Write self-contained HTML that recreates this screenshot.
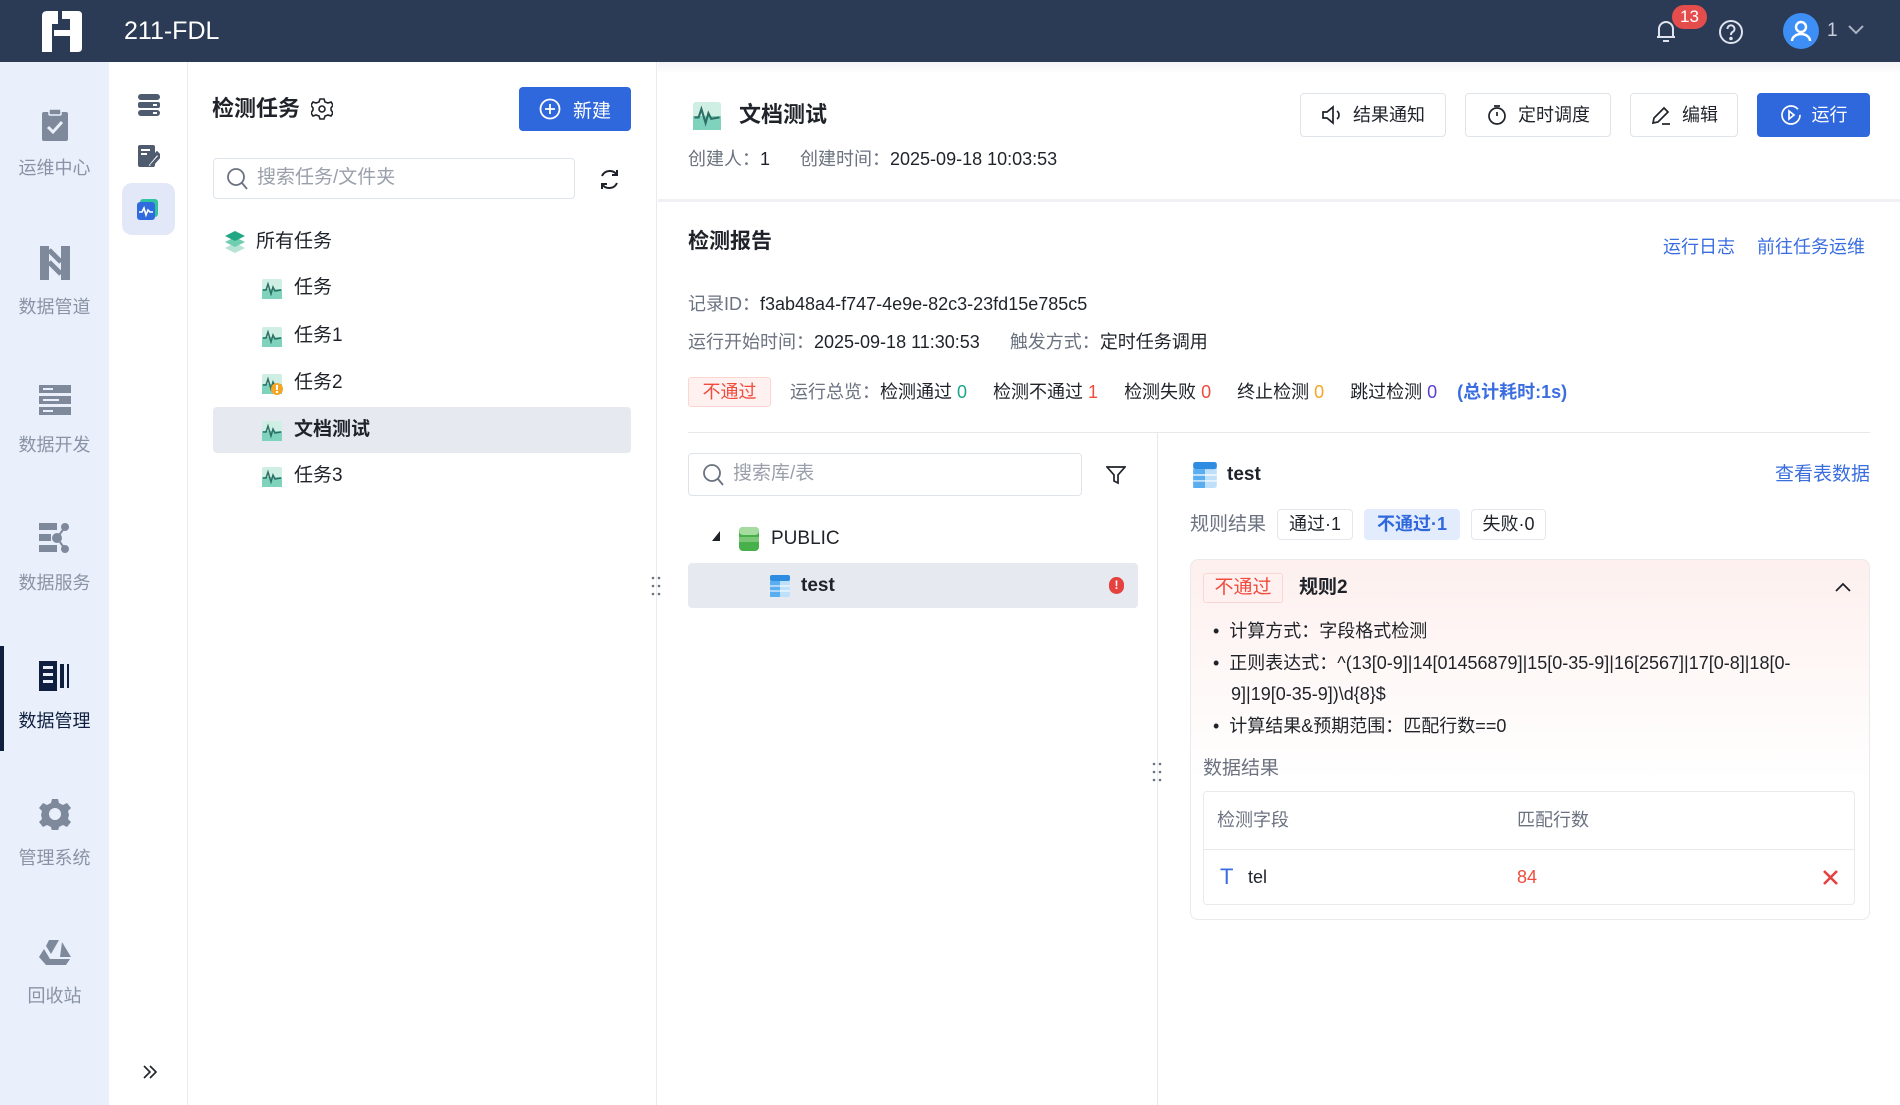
<!DOCTYPE html>
<html><head><meta charset="utf-8">
<style>
*{box-sizing:border-box;margin:0;padding:0}
body{width:1900px;height:1105px;overflow:hidden;background:#fff;font-family:"Liberation Sans","Noto Sans CJK SC",sans-serif;color:#1f2329;position:relative;font-size:18px}
.a{position:absolute;white-space:nowrap}
.hdr{left:0;top:0;width:1900px;height:62px;background:#2b3a55}
.nav{left:0;top:62px;width:109px;height:1043px;background:#eaf0fb}
.col2{left:109px;top:62px;width:79px;height:1043px;background:#fff;border-right:1px solid #e8eaef}
.navlab{width:109px;text-align:center;font-size:18px;color:#8a93a6;line-height:24px}
.btn{border:1px solid #dfe3ea;border-radius:4px;background:#fff;height:44px;line-height:42px;font-size:18px;color:#1f2329;display:flex;align-items:center;justify-content:center;gap:10px}
.gray{color:#6b7280}
.tag{border:1px solid #fbd5d2;background:#fff1f0;color:#f04b3c;border-radius:3px;text-align:center}
.chip{border:1px solid #e4e7ec;border-radius:4px;height:31px;line-height:29px;text-align:center;font-size:18px;background:#fff}
</style></head><body>
<div class="a hdr"></div>
<svg class="a" style="left:40px;top:10px" width="44" height="43" viewBox="0 0 44 43"><path d="M2 6 Q2 1 7 1 H18 V14 H12 V42 H2 Z" fill="#fff"/><path d="M22 1 H38 Q42 1 42 5 V38 Q42 42 38 42 H30 V26 H14 V20 H30 V9 H22 Z" fill="#fff"/></svg>
<div class="a" style="left:124px;top:14px;font-size:25px;color:#fff;line-height:34px">211-FDL</div>
<svg class="a" style="left:1654px;top:18px" width="24" height="26" viewBox="0 0 24 26" fill="none" stroke="#dfe4ee" stroke-width="2"><path d="M5 19 V11 a7 7 0 0 1 14 0 V19 H3 H21"/><path d="M9 23 H15"/></svg>
<div class="a" style="left:1672px;top:5px;width:35px;height:24px;border-radius:12px;background:#e54d4d;color:#fff;font-size:17px;text-align:center;line-height:24px">13</div>
<svg class="a" style="left:1718px;top:19px" width="26" height="26" viewBox="0 0 26 26" fill="none" stroke="#dfe4ee" stroke-width="2"><circle cx="13" cy="13" r="11"/><path d="M9.5 10 a3.5 3.5 0 1 1 5 3 c-1.3 .7 -1.5 1.5 -1.5 3"/><circle cx="13" cy="19.5" r=".8" fill="#dfe4ee"/></svg>
<div class="a" style="left:1783px;top:13px;width:36px;height:36px;border-radius:50%;background:#3d8ff5"></div>
<svg class="a" style="left:1783px;top:13px" width="36" height="36" viewBox="0 0 36 36" fill="none" stroke="#fff" stroke-width="2.4"><circle cx="18" cy="14" r="5"/><path d="M9 28 a9 7 0 0 1 18 0"/></svg>
<div class="a" style="left:1827px;top:19px;color:#c9cfda;font-size:19px;line-height:24px">1</div>
<svg class="a" style="left:1847px;top:24px" width="18" height="12" viewBox="0 0 18 12" fill="none" stroke="#a9b1c0" stroke-width="2"><path d="M2 2 L9 9 L16 2"/></svg>

<div class="a nav"></div>
<div class="a" style="left:0;top:646px;width:4px;height:105px;background:#0f1f3f"></div>
<svg class="a" style="left:41px;top:108px" width="28" height="34" viewBox="0 0 28 34"><rect x="1" y="4" width="26" height="29" rx="2" fill="#7e899c"/><rect x="8" y="1" width="12" height="6" rx="1" fill="#7e899c" stroke="#eaf0fb" stroke-width="1.5"/><path d="M7 19 L12 24 L21 14" stroke="#eaf0fb" stroke-width="3" fill="none"/></svg>
<div class="a navlab" style="left:0;top:156px">运维中心</div>
<svg class="a" style="left:40px;top:246px" width="30" height="34" viewBox="0 0 30 34"><rect x="0" y="0" width="9" height="34" fill="#7e899c"/><rect x="21" y="0" width="9" height="34" fill="#7e899c"/><path d="M9 4 L21 16 M9 16 L21 28" stroke="#7e899c" stroke-width="5"/></svg>
<div class="a navlab" style="left:0;top:295px">数据管道</div>
<svg class="a" style="left:39px;top:385px" width="32" height="30" viewBox="0 0 32 30" fill="#7e899c"><rect x="0" y="0" width="32" height="8"/><rect x="0" y="11" width="32" height="8"/><rect x="0" y="22" width="32" height="8"/><rect x="4" y="3" width="10" height="2" fill="#eaf0fb"/><rect x="4" y="14" width="16" height="2" fill="#eaf0fb"/><rect x="4" y="25" width="10" height="2" fill="#eaf0fb"/></svg>
<div class="a navlab" style="left:0;top:433px">数据开发</div>
<svg class="a" style="left:39px;top:522px" width="32" height="32" viewBox="0 0 32 32" fill="#7e899c"><rect x="0" y="1" width="18" height="7"/><rect x="0" y="12" width="12" height="7"/><rect x="0" y="23" width="18" height="7"/><circle cx="26" cy="5" r="4"/><circle cx="18" cy="16" r="5"/><circle cx="26" cy="27" r="4"/><path d="M18 16 L26 5 M18 16 L26 27" stroke="#7e899c" stroke-width="2"/></svg>
<div class="a navlab" style="left:0;top:571px">数据服务</div>
<svg class="a" style="left:39px;top:660px" width="32" height="32" viewBox="0 0 32 32" fill="#0f1f3f"><rect x="0" y="1" width="18" height="30"/><rect x="4" y="6" width="10" height="3" fill="#eaf0fb"/><rect x="4" y="13" width="10" height="3" fill="#eaf0fb"/><rect x="4" y="20" width="10" height="3" fill="#eaf0fb"/><rect x="21" y="4" width="4" height="24"/><rect x="28" y="4" width="2" height="24"/></svg>
<div class="a navlab" style="left:0;top:709px;color:#0f1f3f">数据管理</div>
<svg class="a" style="left:39px;top:798px" width="32" height="32" viewBox="0 0 32 32"><path d="M13 1h6l1 4 4 2 4-2 4 5-3 3 1 4-1 4 3 3-4 5-4-2-4 2-1 4h-6l-1-4-4-2-4 2-4-5 3-3-1-4 1-4-3-3 4-5 4 2 4-2z" fill="#7e899c"/><circle cx="16" cy="16" r="6" fill="#eaf0fb"/></svg>
<div class="a navlab" style="left:0;top:846px">管理系统</div>
<svg class="a" style="left:39px;top:938px" width="32" height="28" viewBox="0 0 32 28" fill="#7e899c"><path d="M10 2 h10 l-8 14 l-5 -8 z"/><path d="M23 4 l9 15 h-11 z"/><path d="M0 19 l5 -8 l6 10 h20 l-4 6 h-20 z"/></svg>
<div class="a navlab" style="left:0;top:984px">回收站</div>

<div class="a col2"></div>
<div class="a" style="left:122px;top:183px;width:53px;height:52px;border-radius:10px;background:#e2e8f8"></div>
<svg class="a" style="left:138px;top:94px" width="22" height="22" viewBox="0 0 22 22" fill="#4f5b6e"><rect x="0" y="0" width="22" height="6" rx="3"/><rect x="0" y="8" width="22" height="6" rx="2"/><rect x="0" y="16" width="22" height="6" rx="3"/><rect x="15" y="10" width="4" height="2" fill="#fff"/><rect x="15" y="18" width="4" height="2" fill="#fff"/></svg>
<svg class="a" style="left:138px;top:145px" width="22" height="22" viewBox="0 0 22 22"><rect x="0" y="0" width="17" height="22" rx="2" fill="#4f5b6e"/><path d="M3 5h9M3 9h6" stroke="#fff" stroke-width="2"/><path d="M9 20 L19 8 L22 11 L13 21" stroke="#4f5b6e" stroke-width="3" fill="#fff"/></svg>
<div class="a" style="left:140px;top:199px;width:18px;height:18px;background:#2ec4a0;border-radius:3px"></div>
<div class="a" style="left:137px;top:202px;width:18px;height:18px;background:#2f6bdf;border-radius:3px"></div>
<svg class="a" style="left:137px;top:202px" width="18" height="18" viewBox="0 0 18 18" fill="none" stroke="#fff" stroke-width="1.6"><path d="M2 10 L5 10 L7 6 L9 13 L11 8 L13 10 L16 10"/></svg>

<div class="a" style="left:188px;top:62px;width:469px;height:1043px;border-right:1px solid #e8eaef"></div>
<div class="a" style="left:212px;top:95px;font-size:22px;font-weight:bold;line-height:28px">检测任务</div>
<svg class="a" style="left:311px;top:98px" width="22" height="22" viewBox="0 0 22 22"><path d="M9 1h4l1 3 3 1 3-1 2 3-2 3v2l2 3-2 3-3-1-3 1-1 3H9l-1-3-3-1-3 1-2-3 2-3V10L0 7l2-3 3 1 3-1z" fill="none" stroke="#1f2329" stroke-width="1.6"/><circle cx="11" cy="11" r="3" fill="none" stroke="#1f2329" stroke-width="1.6"/></svg>
<div class="a" style="left:519px;top:87px;width:112px;height:44px;border-radius:4px;background:#2f67dc;color:#fff;font-size:19px;display:flex;align-items:center;justify-content:center;gap:12px"><svg width="22" height="22" viewBox="0 0 22 22" fill="none" stroke="#fff" stroke-width="1.8"><circle cx="11" cy="11" r="9.5"/><path d="M11 6v10M6 11h10"/></svg>新建</div>
<div class="a" style="left:213px;top:158px;width:362px;height:41px;border:1px solid #dfe3ea;border-radius:4px"></div>
<svg class="a" style="left:226px;top:167px" width="23" height="24" viewBox="0 0 23 24" fill="none" stroke="#6b7280" stroke-width="1.8"><circle cx="10" cy="10" r="8"/><path d="M16 16 L21 22"/></svg>
<div class="a" style="left:257px;top:166px;color:#9aa0ab;font-size:19px;line-height:24px">搜索任务/文件夹</div>
<svg class="a" style="left:598px;top:168px" width="23" height="23" viewBox="0 0 23 23" fill="none" stroke="#1f2329" stroke-width="2"><path d="M4 8 A8.5 8.5 0 0 1 19 7"/><path d="M19 15 A8.5 8.5 0 0 1 4 16"/><path d="M19 2v5h-5M4 21v-5h5"/></svg>
<svg class="a" style="left:224px;top:231px" width="22" height="22" viewBox="0 0 22 22"><path d="M11 12 L21 17 L11 22 L1 17Z" fill="#b7e3d6"/><path d="M11 6 L21 11 L11 16 L1 11Z" fill="#6fcdb0"/><path d="M11 0 L21 5 L11 10 L1 5Z" fill="#22a785"/></svg>
<div class="a" style="left:256px;top:230px;font-size:19px;line-height:24px">所有任务</div>
<div class="a" style="left:213px;top:407px;width:418px;height:46px;background:#e6e9f0;border-radius:4px"></div>
<svg width="0" height="0" style="position:absolute"><defs><g id="ti"><rect x="0" y="0" width="20" height="20" rx="2" fill="#cfeee4"/><rect x="0" y="10" width="20" height="10" fill="#7fd3bd"/><path d="M1 11 L4 11 L6 5 L9 15 L11 8 L13 12 L19 11" stroke="#2c6f66" stroke-width="1.5" fill="none"/></g></defs></svg>
<svg class="a" style="left:262px;top:279px" width="20" height="20"><use href="#ti"/></svg><div class="a" style="left:294px;top:276px;font-size:19px;line-height:24px">任务</div>
<svg class="a" style="left:262px;top:327px" width="20" height="20"><use href="#ti"/></svg><div class="a" style="left:294px;top:324px;font-size:19px;line-height:24px">任务1</div>
<svg class="a" style="left:262px;top:374px" width="22" height="22"><use href="#ti"/><circle cx="15" cy="15" r="6" fill="#f5a623"/><rect x="14" y="11" width="2" height="5" fill="#fff"/><rect x="14" y="17" width="2" height="2" fill="#fff"/></svg><div class="a" style="left:294px;top:371px;font-size:19px;line-height:24px">任务2</div>
<svg class="a" style="left:262px;top:421px" width="20" height="20"><use href="#ti"/></svg><div class="a" style="left:294px;top:418px;font-size:19px;line-height:24px;font-weight:bold">文档测试</div>
<svg class="a" style="left:262px;top:467px" width="20" height="20"><use href="#ti"/></svg><div class="a" style="left:294px;top:464px;font-size:19px;line-height:24px">任务3</div>

<div class="a" style="left:658px;top:62px;width:1242px;height:12px;background:linear-gradient(#f3f4f7,#fff)"></div>
<svg class="a" style="left:693px;top:102px" width="28" height="28" viewBox="0 0 20 20"><use href="#ti"/></svg>
<div class="a" style="left:739px;top:101px;font-size:22px;font-weight:bold;line-height:28px">文档测试</div>
<div class="a btn" style="left:1300px;top:93px;width:146px"><svg width="22" height="22" viewBox="0 0 22 22" fill="none" stroke="#1f2329" stroke-width="1.7"><path d="M2 8h4l6-5v16l-6-5H2z"/><path d="M16 7a5 5 0 0 1 0 8"/></svg>结果通知</div>
<div class="a btn" style="left:1465px;top:93px;width:146px"><svg width="22" height="22" viewBox="0 0 22 22" fill="none" stroke="#1f2329" stroke-width="1.7"><circle cx="11" cy="12" r="8"/><path d="M11 12V8M8 2h6"/></svg>定时调度</div>
<div class="a btn" style="left:1630px;top:93px;width:108px"><svg width="22" height="22" viewBox="0 0 22 22" fill="none" stroke="#1f2329" stroke-width="1.7"><path d="M3 19l1-5L14 4l4 4L8 18z"/><path d="M12 20h8"/></svg>编辑</div>
<div class="a btn" style="left:1757px;top:93px;width:113px;background:#2f67dc;border-color:#2f67dc;color:#fff"><svg width="22" height="22" viewBox="0 0 22 22" fill="none" stroke="#fff" stroke-width="1.7"><circle cx="11" cy="11" r="9" stroke-dasharray="50 6"/><path d="M9 7l5 4-5 4z"/></svg>运行</div>
<div class="a" style="left:688px;top:148px;line-height:22px"><span class="gray">创建人：</span>1<span class="gray" style="margin-left:30px">创建时间：</span>2025-09-18 10:03:53</div>
<div class="a" style="left:658px;top:199px;width:1242px;height:3px;background:#f0f1f4"></div>
<div class="a" style="left:688px;top:229px;font-size:21px;font-weight:bold;line-height:26px">检测报告</div>
<div class="a" style="left:1663px;top:236px;color:#3a6ee0;line-height:22px">运行日志</div>
<div class="a" style="left:1757px;top:236px;color:#3a6ee0;line-height:22px">前往任务运维</div>
<div class="a" style="left:688px;top:293px;line-height:22px"><span class="gray">记录ID：</span>f3ab48a4-f747-4e9e-82c3-23fd15e785c5</div>
<div class="a" style="left:688px;top:331px;line-height:22px"><span class="gray">运行开始时间：</span>2025-09-18 11:30:53<span class="gray" style="margin-left:30px">触发方式：</span>定时任务调用</div>
<div class="a tag" style="left:688px;top:377px;width:83px;height:30px;line-height:28px;font-size:18px">不通过</div>
<div class="a" style="left:790px;top:381px;line-height:22px"><span class="gray">运行总览：</span>检测通过 <span style="color:#1aa58a">0</span><span style="margin-left:26px">检测不通过 <span style="color:#f04b3c">1</span></span><span style="margin-left:26px">检测失败 <span style="color:#f04b3c">0</span></span><span style="margin-left:26px">终止检测 <span style="color:#f5a623">0</span></span><span style="margin-left:26px">跳过检测 <span style="color:#5b3fd0">0</span></span><span style="margin-left:20px;color:#3a6ee0;font-weight:bold">(总计耗时:1s)</span></div>
<div class="a" style="left:688px;top:432px;width:1182px;height:1px;background:#e6e8ec"></div>
<div class="a" style="left:1157px;top:433px;width:1px;height:672px;background:#e6e8ec"></div>
<div class="a" style="left:688px;top:453px;width:394px;height:43px;border:1px solid #dfe3ea;border-radius:4px"></div>
<svg class="a" style="left:702px;top:463px" width="23" height="24" viewBox="0 0 23 24" fill="none" stroke="#6b7280" stroke-width="1.8"><circle cx="10" cy="10" r="8"/><path d="M16 16 L21 22"/></svg>
<div class="a" style="left:733px;top:462px;color:#9aa0ab;font-size:19px;line-height:24px">搜索库/表</div>
<svg class="a" style="left:1106px;top:465px" width="20" height="20" viewBox="0 0 20 20" fill="none" stroke="#1f2329" stroke-width="1.7"><path d="M1 2h18l-7 8v8l-4-2v-6z"/></svg>
<svg class="a" style="left:712px;top:531px" width="8" height="10"><path d="M8 0 L8 10 L0 10Z" fill="#1f2329"/></svg>
<svg class="a" style="left:739px;top:527px" width="20" height="24" viewBox="0 0 20 24"><rect x="0" y="0" width="20" height="24" rx="4" fill="#47b04b"/><rect x="0" y="0" width="20" height="8" rx="4" fill="#a6dca0"/><rect x="0" y="10" width="20" height="5" fill="#7bc777"/></svg>
<div class="a" style="left:771px;top:527px;font-size:19px;line-height:24px">PUBLIC</div>
<div class="a" style="left:688px;top:563px;width:450px;height:45px;background:#e6e9f0;border-radius:4px"></div>
<svg class="a" style="left:770px;top:575px" width="20" height="22" viewBox="0 0 20 22"><rect x="0" y="0" width="20" height="22" rx="2" fill="#bfe0fb"/><rect x="0" y="0" width="20" height="6" rx="2" fill="#2e8de0"/><rect x="0" y="6" width="10" height="16" fill="#5aaef0"/><path d="M0 11h20M0 16h20" stroke="#fff" stroke-width="1"/></svg>
<div class="a" style="left:801px;top:574px;font-size:19px;font-weight:bold;line-height:24px">test</div>
<div class="a" style="left:1109px;top:577px;width:15px;height:17px;border-radius:8px;background:#e5413f;color:#fff;font-size:12px;text-align:center;line-height:17px;font-weight:bold">!</div>
<svg class="a" style="left:651px;top:576px" width="10" height="22"><g fill="#6b7280"><circle cx="2" cy="2" r="1.3"/><circle cx="8" cy="2" r="1.3"/><circle cx="2" cy="10" r="1.3"/><circle cx="8" cy="10" r="1.3"/><circle cx="2" cy="18" r="1.3"/><circle cx="8" cy="18" r="1.3"/></g></svg>
<svg class="a" style="left:1152px;top:762px" width="10" height="22"><g fill="#6b7280"><circle cx="2" cy="2" r="1.3"/><circle cx="8" cy="2" r="1.3"/><circle cx="2" cy="10" r="1.3"/><circle cx="8" cy="10" r="1.3"/><circle cx="2" cy="18" r="1.3"/><circle cx="8" cy="18" r="1.3"/></g></svg>
<svg class="a" style="left:1193px;top:462px" width="24" height="26" viewBox="0 0 20 22"><rect x="0" y="0" width="20" height="22" rx="2" fill="#bfe0fb"/><rect x="0" y="0" width="20" height="6" rx="2" fill="#2e8de0"/><rect x="0" y="6" width="10" height="16" fill="#5aaef0"/><path d="M0 11h20M0 16h20" stroke="#fff" stroke-width="1"/></svg>
<div class="a" style="left:1227px;top:463px;font-size:19px;font-weight:bold;line-height:24px">test</div>
<div class="a" style="left:1775px;top:463px;color:#3a6ee0;font-size:19px;line-height:24px">查看表数据</div>
<div class="a" style="left:1190px;top:514px;color:#6b7280;font-size:19px;line-height:22px">规则结果</div>
<div class="a chip" style="left:1277px;top:509px;width:76px">通过·1</div>
<div class="a chip" style="left:1364px;top:509px;width:96px;background:#e3ecfd;border-color:#e3ecfd;color:#2f67dc;font-weight:bold">不通过·1</div>
<div class="a chip" style="left:1471px;top:509px;width:75px">失败·0</div>
<div class="a" style="left:1190px;top:559px;width:680px;height:361px;border:1px solid #e8eaee;border-radius:8px;background:linear-gradient(#fdf0ee 0px,#fff 220px)"></div>
<div class="a tag" style="left:1203px;top:573px;width:80px;height:30px;line-height:28px;font-size:19px">不通过</div>
<div class="a" style="left:1299px;top:576px;font-size:19px;font-weight:bold;line-height:24px">规则2</div>
<svg class="a" style="left:1834px;top:581px" width="18" height="12" viewBox="0 0 18 12" fill="none" stroke="#1f2329" stroke-width="1.8"><path d="M2 10 L9 3 L16 10"/></svg>
<div class="a" style="left:1213px;top:620px;line-height:22px">•&nbsp; 计算方式：字段格式检测</div>
<div class="a" style="left:1213px;top:652px;line-height:22px">•&nbsp; 正则表达式：^(13[0-9]|14[01456879]|15[0-35-9]|16[2567]|17[0-8]|18[0-</div>
<div class="a" style="left:1231px;top:683px;line-height:22px">9]|19[0-35-9])\d{8}$</div>
<div class="a" style="left:1213px;top:715px;line-height:22px">•&nbsp; 计算结果&amp;预期范围：匹配行数==0</div>
<div class="a" style="left:1203px;top:758px;color:#6b7280;font-size:19px;line-height:22px">数据结果</div>
<div class="a" style="left:1203px;top:791px;width:652px;height:114px;border:1px solid #e8eaee;border-radius:4px;background:#fff"></div>
<div class="a" style="left:1203px;top:849px;width:652px;height:1px;background:#e8eaee"></div>
<div class="a" style="left:1217px;top:809px;color:#6b7280;line-height:22px">检测字段</div>
<div class="a" style="left:1517px;top:809px;color:#6b7280;line-height:22px">匹配行数</div>
<div class="a" style="left:1220px;top:864px;color:#3a6ee0;font-size:22px;line-height:26px">T</div>
<div class="a" style="left:1248px;top:866px;line-height:22px">tel</div>
<div class="a" style="left:1517px;top:866px;color:#f04b3c;line-height:22px">84</div>
<svg class="a" style="left:1823px;top:870px" width="15" height="15" viewBox="0 0 15 15" stroke="#e5413f" stroke-width="2.6"><path d="M1 1L14 14M14 1L1 14"/></svg>
<svg class="a" style="left:142px;top:1064px" width="16" height="16" viewBox="0 0 16 16" fill="none" stroke="#1f2329" stroke-width="1.6"><path d="M2 2l6 6-6 6M8 2l6 6-6 6"/></svg>
</body></html>
